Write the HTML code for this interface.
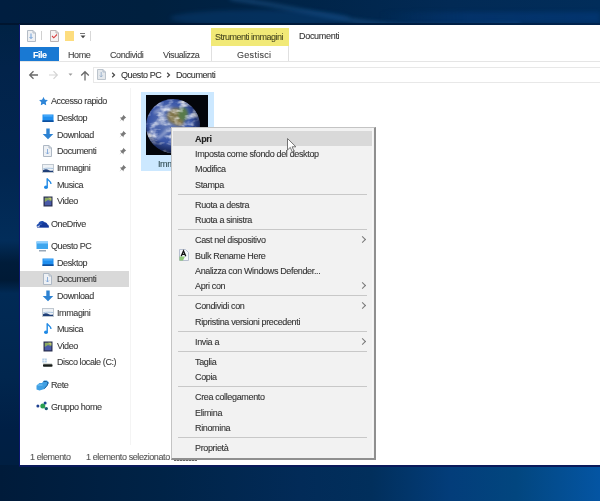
<!DOCTYPE html>
<html><head><meta charset="utf-8">
<style>
*{margin:0;padding:0;box-sizing:border-box}
html,body{width:600px;height:501px;overflow:hidden}
body{position:relative;font-family:"Liberation Sans",sans-serif;font-size:9px;color:#333;
background:linear-gradient(90deg,#0a1c38 0%,#0b2547 45%,#0b3a72 75%,#0c4a8c 100%)}
.a{position:absolute;white-space:nowrap}
.t{-webkit-text-stroke:0.1px currentColor;will-change:transform;position:absolute;white-space:nowrap;line-height:10px;letter-spacing:-0.4px}
#win{position:absolute;left:20px;top:25px;width:580px;height:440px;background:#fff}
.nav{color:#3a3a3a}
.mi{margin-top:0.5px;-webkit-text-stroke:0.1px currentColor;will-change:transform;position:absolute;left:195px;line-height:10px;white-space:nowrap;letter-spacing:-0.35px;color:#333}
.sep{position:absolute;left:178px;width:189px;height:1px;background:#c8c8c8}
.arr{position:absolute;left:360px;width:5px;height:5px;border-right:1px solid #777;border-top:1px solid #777;transform:rotate(45deg)}
</style></head><body>
<div id="root" style="position:absolute;left:0;top:0;width:600px;height:501px;filter:blur(0.3px)">
<div id="bgtop" class="a" style="left:0;top:0;width:600px;height:25px;background:linear-gradient(90deg,#001e40 0%,#00203f 25%,#002448 50%,#022a55 75%,#012d5a 100%)"></div>
<svg class="a" style="left:0;top:0" width="600" height="25" viewBox="0 0 600 25"><defs><filter id="sb" x="-10%" y="-100%" width="120%" height="300%"><feGaussianBlur stdDeviation="2.2"/></filter></defs>
<path d="M230 -2C270 4 310 12 350 20S450 26 520 24" stroke="#2a6aa8" stroke-width="3" fill="none" opacity="0.55" filter="url(#sb)"/>
<ellipse cx="260" cy="18" rx="90" ry="8" fill="#0d4a88" opacity="0.35" filter="url(#sb)"/>
</svg>
<div class="a" style="left:380px;top:12px;width:220px;height:11px;background:linear-gradient(90deg,rgba(4,60,130,0),rgba(4,60,130,0.45) 40%,rgba(4,60,130,0.5));filter:blur(2px)"></div>
<div class="a" style="left:0;top:23px;width:600px;height:2px;background:linear-gradient(90deg,#00152f,#001a3a 50%,#00244f)"></div>
<div id="bgbot" class="a" style="left:0;top:465px;width:600px;height:36px;background:linear-gradient(90deg,#001b3a 0%,#002347 27%,#022b58 50%,#012f5c 62%,#033d7a 75%,#02467f 86%,#0455a3 100%)"></div>
<div class="a" style="left:19px;top:465px;width:581px;height:2px;background:#0a1a5a"></div>
<div id="bgleft" class="a" style="left:0;top:25px;width:19px;height:440px;background:linear-gradient(180deg,#002244 0%,#02234a 10%,#012650 33%,#022d5a 49%,#001c3a 54%,#001a36 58%,#012a55 61%,#01264e 80%,#001f45 92%,#001f42 100%)"></div>
<div class="a" style="left:19px;top:24px;width:1px;height:442px;background:#0c1670"></div>
<div id="win"></div>
<!-- quick access toolbar -->
<svg class="a" style="left:27px;top:30px" width="9" height="12" viewBox="0 0 9 12"><path d="M0.5 0.5h5.5l2.5 2.5v8.5h-8z" fill="#eef0f3" stroke="#b4bcc6"/><path d="M6 0.5v2.5h2.5" fill="none" stroke="#b4bcc6"/><path d="M4 3.5v5M2.5 7l1.5 1.5L5.5 7" stroke="#6f9fd8" stroke-width="1" fill="none"/></svg>
<div class="a" style="left:41px;top:31px;width:1px;height:9px;background:#d0d0d0"></div>
<svg class="a" style="left:50px;top:30px" width="9" height="12" viewBox="0 0 9 12"><path d="M0.5 0.5h5.5l2.5 2.5v8.5h-8z" fill="#f6f3f3" stroke="#bcb4b4"/><path d="M6 0.5v2.5h2.5" fill="none" stroke="#bcb4b4"/><path d="M2 6l1.8 1.8L7 4.5" stroke="#d84040" stroke-width="1.1" fill="none"/></svg>
<div class="a" style="left:65px;top:31px;width:9px;height:10px;background:#fddd7e"></div>
<div class="a" style="left:80px;top:33px;width:5px;height:1px;background:#777"></div>
<svg class="a" style="left:80px;top:35px" width="6" height="4" viewBox="0 0 6 4"><path d="M0.5 0.5h5L3 3.2z" fill="#444"/></svg>
<div class="a" style="left:90px;top:31px;width:1px;height:10px;background:#d8d8d8"></div>

<!-- contextual tab -->
<div class="a" style="left:211px;top:28px;width:78px;height:18px;background:#f1e977"></div>
<div class="t" style="left:215px;top:32px;color:#4a4a22;letter-spacing:-0.5px">Strumenti immagini</div>
<div class="t" style="left:299px;top:31px;color:#333;letter-spacing:-0.3px">Documenti</div>

<!-- ribbon tabs -->
<div class="a" style="left:20px;top:47px;width:39px;height:15px;background:#1979d3"></div>
<div class="t" style="left:33px;top:50px;color:#fff;font-weight:bold;letter-spacing:-0.5px">File</div>
<div class="t" style="left:68px;top:50px;color:#444">Home</div>
<div class="t" style="left:110px;top:50px;color:#444">Condividi</div>
<div class="t" style="left:163px;top:50px;color:#444">Visualizza</div>
<div class="a" style="left:211px;top:46px;width:1px;height:16px;background:#e0e0e0"></div>
<div class="a" style="left:288px;top:46px;width:1px;height:16px;background:#e0e0e0"></div>
<div class="t" style="left:237px;top:50px;color:#444;letter-spacing:0.3px">Gestisci</div>
<div class="a" style="left:20px;top:61px;width:580px;height:1px;background:#e5e5e5"></div>

<!-- address bar -->
<div class="a" style="left:93px;top:67px;width:507px;height:16px;border:1px solid #e8e8e8;border-right:none"></div>
<div class="t" style="left:121px;top:70px;color:#333">Questo PC</div>
<div class="t" style="left:176px;top:70px;color:#333">Documenti</div>
<svg class="a" style="left:111px;top:72px" width="5" height="6" viewBox="0 0 5 6"><path d="M1.2 0.8L3.5 3 1.2 5.2" fill="none" stroke="#444" stroke-width="1.2"/></svg>
<svg class="a" style="left:166px;top:72px" width="5" height="6" viewBox="0 0 5 6"><path d="M1.2 0.8L3.5 3 1.2 5.2" fill="none" stroke="#444" stroke-width="1.2"/></svg>
<svg class="a" style="left:97px;top:69px" width="9" height="11" viewBox="0 0 9 11"><path d="M0.5 0.5h5.5l2.5 2.5v7.5h-8z" fill="#e4e8ec" stroke="#bcc4cc"/><path d="M6 0.5v2.5h2.5" fill="none" stroke="#b0bccb"/><path d="M4.2 3v5M2.8 6.5l1.4 1.5 1.4-1.5" stroke="#98b0cc" stroke-width="0.9" fill="none"/></svg>


<!-- nav arrows -->
<svg class="a" style="left:28px;top:70px" width="11" height="10" viewBox="0 0 11 10"><path d="M10 5H2M5.5 1.2L1.7 5l3.8 3.8" fill="none" stroke="#6a6a6a" stroke-width="1.3"/></svg>
<svg class="a" style="left:48px;top:70px" width="11" height="10" viewBox="0 0 11 10"><path d="M1 5h8M5.5 1.2L9.3 5 5.5 8.8" fill="none" stroke="#d4d4d4" stroke-width="1.2"/></svg>
<svg class="a" style="left:68px;top:73px" width="5" height="3" viewBox="0 0 5 3"><path d="M0.5 0.5h4L2.5 2.8z" fill="#999"/></svg>
<svg class="a" style="left:80px;top:70px" width="10" height="11" viewBox="0 0 10 11"><path d="M5 10.5V2M1.2 5.5L5 1.7l3.8 3.8" fill="none" stroke="#6a6a6a" stroke-width="1.3"/></svg>
<!-- nav pane icons -->
<svg class="a" style="left:39px;top:97px" width="9" height="9" viewBox="0 0 10 10"><path d="M5 0.3l1.4 3 3.3.3-2.5 2.2.8 3.3L5 7.4 2 9.1l.8-3.3L.3 3.6l3.3-.3z" fill="#2f86d8"/></svg>
<!-- nav pane -->
<div class="a" style="left:20px;top:271px;width:109px;height:16px;background:#d9d9d9"></div>
<div class="t nav" style="left:51px;top:96px">Accesso rapido</div>
<svg class="a" style="left:39px;top:97px" width="9" height="8" viewBox="0 0 9 8"><path d="M4.5 0l1.2 2.8 3 .2-2.3 2 .8 3L4.5 6.4 1.8 8l.8-3L.3 3l3-.2z" fill="#2f86d8"/></svg>
<div class="t nav" style="left:57px;top:113px">Desktop</div>
<svg class="a" style="left:42px;top:114px" width="12" height="9" viewBox="0 0 12 9"><rect x="0.5" y="0.5" width="11" height="7.5" fill="#1f8fef"/><rect x="0.5" y="6.3" width="11" height="1.7" fill="#0d4f9e"/><rect x="1.5" y="1.3" width="9" height="1.2" fill="#55b2ff"/></svg>
<div class="t nav" style="left:57px;top:129.5px">Download</div>
<svg class="a" style="left:42px;top:128px" width="12" height="12" viewBox="0 0 12 12"><path d="M4.3 0.5h3.4v5.5h3.6L6 11.3 0.7 6h3.6z" fill="#2d82d2"/></svg>
<div class="t nav" style="left:57px;top:146px">Documenti</div>
<svg class="a" style="left:43px;top:145px" width="9" height="12" viewBox="0 0 9 12"><path d="M0.5 0.5h5.5l2.5 2.5v8.5h-8z" fill="#eef1f5" stroke="#aeb8c4" stroke-width="1"/><path d="M6 0.5v2.5h2.5" fill="none" stroke="#aeb8c4"/><path d="M4.5 4v5M3 7.5l1.5 1.5 1.5-1.5" fill="none" stroke="#7fa6d8" stroke-width="0.9"/></svg>
<div class="t nav" style="left:57px;top:162.5px">Immagini</div>
<svg class="a" style="left:42px;top:164px" width="12" height="9" viewBox="0 0 12 9"><rect x="0.5" y="0.5" width="11" height="8" fill="#eef2f6" stroke="#c0c8d0"/><path d="M1 8V6.2c2-1.5 4-1.3 6 0 1.5.8 3 .5 4 .2V8z" fill="#1f3f78"/><path d="M1 5c3-1.2 6-.8 10-.5" fill="none" stroke="#a8c4e0" stroke-width="1"/></svg>
<div class="t nav" style="left:57px;top:179.5px">Musica</div>
<svg class="a" style="left:44px;top:178px" width="8" height="12" viewBox="0 0 8 12"><path d="M3.2 0.5v8.2" stroke="#1e88e5" stroke-width="1.4"/><ellipse cx="2" cy="9.3" rx="2" ry="1.7" fill="#1e88e5"/><path d="M3.2 0.5c0.5 2 4 2.5 3.8 5.5" fill="none" stroke="#1e88e5" stroke-width="1.3"/></svg>
<div class="t nav" style="left:57px;top:196px">Video</div>
<svg class="a" style="left:43px;top:196px" width="10" height="11" viewBox="0 0 10 11"><rect x="0.5" y="0.5" width="9" height="10" fill="#2a3050"/><rect x="1.8" y="1.8" width="6.5" height="7.5" fill="#4a5aa8"/><path d="M1.8 1.8h6.5v3.5L5 4 1.8 6z" fill="#8aa860"/><path d="M5 1.8h3.3v2.5z" fill="#c8c870"/></svg>
<div class="t nav" style="left:51px;top:219px">OneDrive</div>
<svg class="a" style="left:36px;top:220px" width="13" height="8" viewBox="0 0 13 8"><path d="M0.8 6.8c-.6-1.3.2-2.6 1.4-2.8.5-1.8 2-3 3.8-3 1.2 0 2.2.6 2.8 1.4" fill="#1f4db0"/><path d="M3.5 7.2c-.4-1.3.4-2.5 1.7-2.6.6-1.6 2-2.6 3.6-2.4 1.4.2 2.4 1.2 2.7 2.4 1 .2 1.6 1.2 1.3 2.6z" fill="#15399a"/><path d="M1 7.2h11.8" stroke="#15399a" stroke-width="0.8"/></svg>
<div class="t nav" style="left:51px;top:240.5px">Questo PC</div>
<svg class="a" style="left:36px;top:241px" width="12" height="12" viewBox="0 0 12 12"><rect x="0.5" y="0.5" width="11.5" height="7.5" fill="#3ea6ee"/><rect x="0.5" y="0.5" width="11.5" height="2" fill="#8fd0ff"/><rect x="3" y="9" width="7" height="1.5" fill="#9aa8b8"/></svg>
<div class="t nav" style="left:57px;top:257.5px">Desktop</div>
<svg class="a" style="left:42px;top:258px" width="12" height="9" viewBox="0 0 12 9"><rect x="0.5" y="0.5" width="11" height="7.5" fill="#1f8fef"/><rect x="0.5" y="6.3" width="11" height="1.7" fill="#0d4f9e"/><rect x="1.5" y="1.3" width="9" height="1.2" fill="#55b2ff"/></svg>
<div class="t nav" style="left:57px;top:274px">Documenti</div>
<svg class="a" style="left:43px;top:273px" width="9" height="12" viewBox="0 0 9 12"><path d="M0.5 0.5h5.5l2.5 2.5v8.5h-8z" fill="#eef1f5" stroke="#aeb8c4" stroke-width="1"/><path d="M6 0.5v2.5h2.5" fill="none" stroke="#aeb8c4"/><path d="M4.5 4v5M3 7.5l1.5 1.5 1.5-1.5" fill="none" stroke="#7fa6d8" stroke-width="0.9"/></svg>
<div class="t nav" style="left:57px;top:291px">Download</div>
<svg class="a" style="left:42px;top:290px" width="12" height="12" viewBox="0 0 12 12"><path d="M4.3 0.5h3.4v5.5h3.6L6 11.3 0.7 6h3.6z" fill="#2d82d2"/></svg>
<div class="t nav" style="left:57px;top:307.5px">Immagini</div>
<svg class="a" style="left:42px;top:308px" width="12" height="9" viewBox="0 0 12 9"><rect x="0.5" y="0.5" width="11" height="8" fill="#eef2f6" stroke="#c0c8d0"/><path d="M1 8V6.2c2-1.5 4-1.3 6 0 1.5.8 3 .5 4 .2V8z" fill="#1f3f78"/><path d="M1 5c3-1.2 6-.8 10-.5" fill="none" stroke="#a8c4e0" stroke-width="1"/></svg>
<div class="t nav" style="left:57px;top:324px">Musica</div>
<svg class="a" style="left:44px;top:323px" width="8" height="12" viewBox="0 0 8 12"><path d="M3.2 0.5v8.2" stroke="#1e88e5" stroke-width="1.4"/><ellipse cx="2" cy="9.3" rx="2" ry="1.7" fill="#1e88e5"/><path d="M3.2 0.5c0.5 2 4 2.5 3.8 5.5" fill="none" stroke="#1e88e5" stroke-width="1.3"/></svg>
<div class="t nav" style="left:57px;top:340.5px">Video</div>
<svg class="a" style="left:43px;top:341px" width="10" height="11" viewBox="0 0 10 11"><rect x="0.5" y="0.5" width="9" height="10" fill="#2a3050"/><rect x="1.8" y="1.8" width="6.5" height="7.5" fill="#4a5aa8"/><path d="M1.8 1.8h6.5v3.5L5 4 1.8 6z" fill="#8aa860"/><path d="M5 1.8h3.3v2.5z" fill="#c8c870"/></svg>
<div class="t nav" style="left:57px;top:357px">Disco locale (C:)</div>
<svg class="a" style="left:42px;top:358px" width="11" height="10" viewBox="0 0 11 10"><rect x="0.3" y="0.5" width="4.5" height="4" fill="#b8d2ea"/><path d="M0.3 2.5h4.5M2.5 0.5v4" stroke="#fff" stroke-width="0.5"/><rect x="1" y="5" width="9" height="1.5" fill="#d8dcd8"/><rect x="1" y="6.3" width="9.5" height="2.5" rx="0.8" fill="#1a1f1c"/></svg>
<div class="t nav" style="left:51px;top:379.5px">Rete</div>
<svg class="a" style="left:36px;top:380px" width="13" height="11" viewBox="0 0 13 11"><path d="M0.5 5.5l3-2.5h2.5l2-2.5h3l2 2-1.5 3-3 3.5-5 1.5-3-1z" fill="#3fa0e4"/><path d="M7.5 1.5h3l1.5 1.5-1 2.5-2.5 3" fill="none" stroke="#1f5f9a" stroke-width="1"/><path d="M1.5 5h5" stroke="#7cc4f4" stroke-width="1"/></svg>
<div class="t nav" style="left:51px;top:401.5px">Gruppo home</div>
<svg class="a" style="left:36px;top:401px" width="12" height="10" viewBox="0 0 12 10"><circle cx="1.9" cy="4.9" r="1.5" fill="#1d3f90"/><circle cx="6.8" cy="4.9" r="2.5" fill="#2aa050"/><circle cx="9.1" cy="1.9" r="1.5" fill="#1a4a90"/><circle cx="10.3" cy="7.6" r="1.7" fill="#1a5a70"/></svg>
<svg class="a" style="left:119px;top:114px" width="8" height="8" viewBox="0 0 8 8"><path d="M4.2 0.8l3 3-1.2.5-1.5 1.7.2 1.5L2.4 5.3 0.5 7.5 2.7 5.6 0.9 3.4l1.5.2 1.7-1.5z" fill="#7a7a7a"/></svg>
<svg class="a" style="left:119px;top:130px" width="8" height="8" viewBox="0 0 8 8"><path d="M4.2 0.8l3 3-1.2.5-1.5 1.7.2 1.5L2.4 5.3 0.5 7.5 2.7 5.6 0.9 3.4l1.5.2 1.7-1.5z" fill="#7a7a7a"/></svg>
<svg class="a" style="left:119px;top:147px" width="8" height="8" viewBox="0 0 8 8"><path d="M4.2 0.8l3 3-1.2.5-1.5 1.7.2 1.5L2.4 5.3 0.5 7.5 2.7 5.6 0.9 3.4l1.5.2 1.7-1.5z" fill="#7a7a7a"/></svg>
<svg class="a" style="left:119px;top:164px" width="8" height="8" viewBox="0 0 8 8"><path d="M4.2 0.8l3 3-1.2.5-1.5 1.7.2 1.5L2.4 5.3 0.5 7.5 2.7 5.6 0.9 3.4l1.5.2 1.7-1.5z" fill="#7a7a7a"/></svg>

<div class="a" style="left:130px;top:88px;width:1px;height:357px;background:#f4f4f4"></div>

<!-- status -->
<div class="t" style="left:30px;top:452px;color:#555">1 elemento</div>
<div class="t" style="left:86px;top:452px;color:#555">1 elemento selezionato</div>
<div class="a" style="left:174px;top:459px;width:23px;height:2px;background:repeating-linear-gradient(90deg,#666 0 2px,#bbb 2px 3px)"></div>

<!-- selected item -->
<div class="a" style="left:141px;top:92px;width:73px;height:79px;background:#cce8ff"></div>
<svg class="a" style="left:146px;top:95px" width="62" height="60" viewBox="0 0 62 60">
<defs>
<radialGradient id="g1" cx="0.45" cy="0.42" r="0.6"><stop offset="0" stop-color="#6a80b8"/><stop offset="0.6" stop-color="#3c58a8"/><stop offset="0.88" stop-color="#2c4494"/><stop offset="1" stop-color="#18265c"/></radialGradient>
<radialGradient id="g2" cx="0.45" cy="0.42" r="0.6"><stop offset="0.65" stop-color="#000" stop-opacity="0"/><stop offset="1" stop-color="#000" stop-opacity="0.5"/></radialGradient>
<filter id="cl" x="0" y="0" width="100%" height="100%"><feTurbulence type="fractalNoise" baseFrequency="0.09 0.16" numOctaves="3" seed="3"/><feColorMatrix values="0 0 0 0 0.94  0 0 0 0 0.95  0 0 0 0 0.98  2.6 0 0 0 -1.2"/><feGaussianBlur stdDeviation="0.4"/></filter>
<filter id="bl" x="-20%" y="-20%" width="140%" height="140%"><feGaussianBlur stdDeviation="1.5"/></filter>
<clipPath id="cp"><circle cx="27" cy="31" r="27"/></clipPath>
</defs>
<rect width="62" height="60" fill="#03050a"/>
<circle cx="27" cy="31" r="27" fill="url(#g1)"/>
<g clip-path="url(#cp)">
<g filter="url(#bl)"><ellipse cx="30" cy="21" rx="9" ry="8" fill="#80744a"/><ellipse cx="37" cy="19" rx="5" ry="7" fill="#587a48"/><ellipse cx="33" cy="28" rx="5" ry="3" fill="#8a7a50"/></g>
<rect width="62" height="60" filter="url(#cl)" opacity="0.95"/>
<g filter="url(#bl)" opacity="0.5"><path d="M8 18c6-4 12-6 18-5M5 32c5-4 10-6 14-10M10 44c5-2 9-6 12-10" stroke="#fff" stroke-width="2.5" fill="none"/></g>
<circle cx="27" cy="31" r="27" fill="url(#g2)"/>
</g>
</svg>
<div class="t" style="left:158px;top:159px;color:#2f4a50">Imm</div>

<!-- context menu -->
<div class="a" style="left:171px;top:127px;width:205px;height:333px;background:#f2f2f2;border-left:1px solid #c4c4c4;border-top:1px solid #c4c4c4;border-right:2px solid #8f8f8f;border-bottom:2px solid #8f8f8f"></div>
<div class="a" style="left:372px;top:128px;width:1px;height:330px;background:#f8f8f8"></div>
<div class="a" style="left:173px;top:131px;width:199px;height:15px;background:#d9d9d9"></div>
<div class="mi" style="top:133px;font-weight:bold;color:#222">Apri</div>
<div class="mi" style="top:148px">Imposta come sfondo del desktop</div>
<div class="mi" style="top:163px">Modifica</div>
<div class="mi" style="top:179px">Stampa</div>
<div class="sep" style="top:194px"></div>
<div class="mi" style="top:199px">Ruota a destra</div>
<div class="mi" style="top:214px">Ruota a sinistra</div>
<div class="sep" style="top:229px"></div>
<div class="mi" style="top:234px">Cast nel dispositivo</div>
<div class="arr" style="top:237px"></div>
<div class="mi" style="top:250px">Bulk Rename Here</div>
<div class="mi" style="top:265px">Analizza con Windows Defender...</div>
<div class="mi" style="top:280px">Apri con</div>
<div class="arr" style="top:283px"></div>
<div class="sep" style="top:295px"></div>
<div class="mi" style="top:300px">Condividi con</div>
<div class="arr" style="top:303px"></div>
<div class="mi" style="top:316px">Ripristina versioni precedenti</div>
<div class="sep" style="top:331px"></div>
<div class="mi" style="top:336px">Invia a</div>
<div class="arr" style="top:339px"></div>
<div class="sep" style="top:351px"></div>
<div class="mi" style="top:356px">Taglia</div>
<div class="mi" style="top:371px">Copia</div>
<div class="sep" style="top:386px"></div>
<div class="mi" style="top:391px">Crea collegamento</div>
<div class="mi" style="top:407px">Elimina</div>
<div class="mi" style="top:422px">Rinomina</div>
<div class="sep" style="top:437px"></div>
<div class="mi" style="top:442px">Proprietà</div>
<svg class="a" style="left:179px;top:249px" width="10" height="12" viewBox="0 0 10 12"><path d="M0.5 0.5h6l3 3v8h-9z" fill="#f4f6fb" stroke="#b8c0d0"/><path d="M2.2 7.2L4.5 1.8 6.8 7.2M3.1 5.3h2.8" stroke="#111" stroke-width="1.3" fill="none"/><path d="M0.5 7.5h5.5l-2 4h-3.5z" fill="#7cc060" opacity="0.85"/></svg>
<svg class="a" style="left:287px;top:138px" width="10" height="15" viewBox="0 0 10 15"><path d="M0.5 0.5v11.5l2.8-2.6 2 4.6 1.8-.8-2-4.4h3.8z" fill="#fff" stroke="#666" stroke-width="0.9" stroke-linejoin="round"/></svg>
</div>
</body></html>
